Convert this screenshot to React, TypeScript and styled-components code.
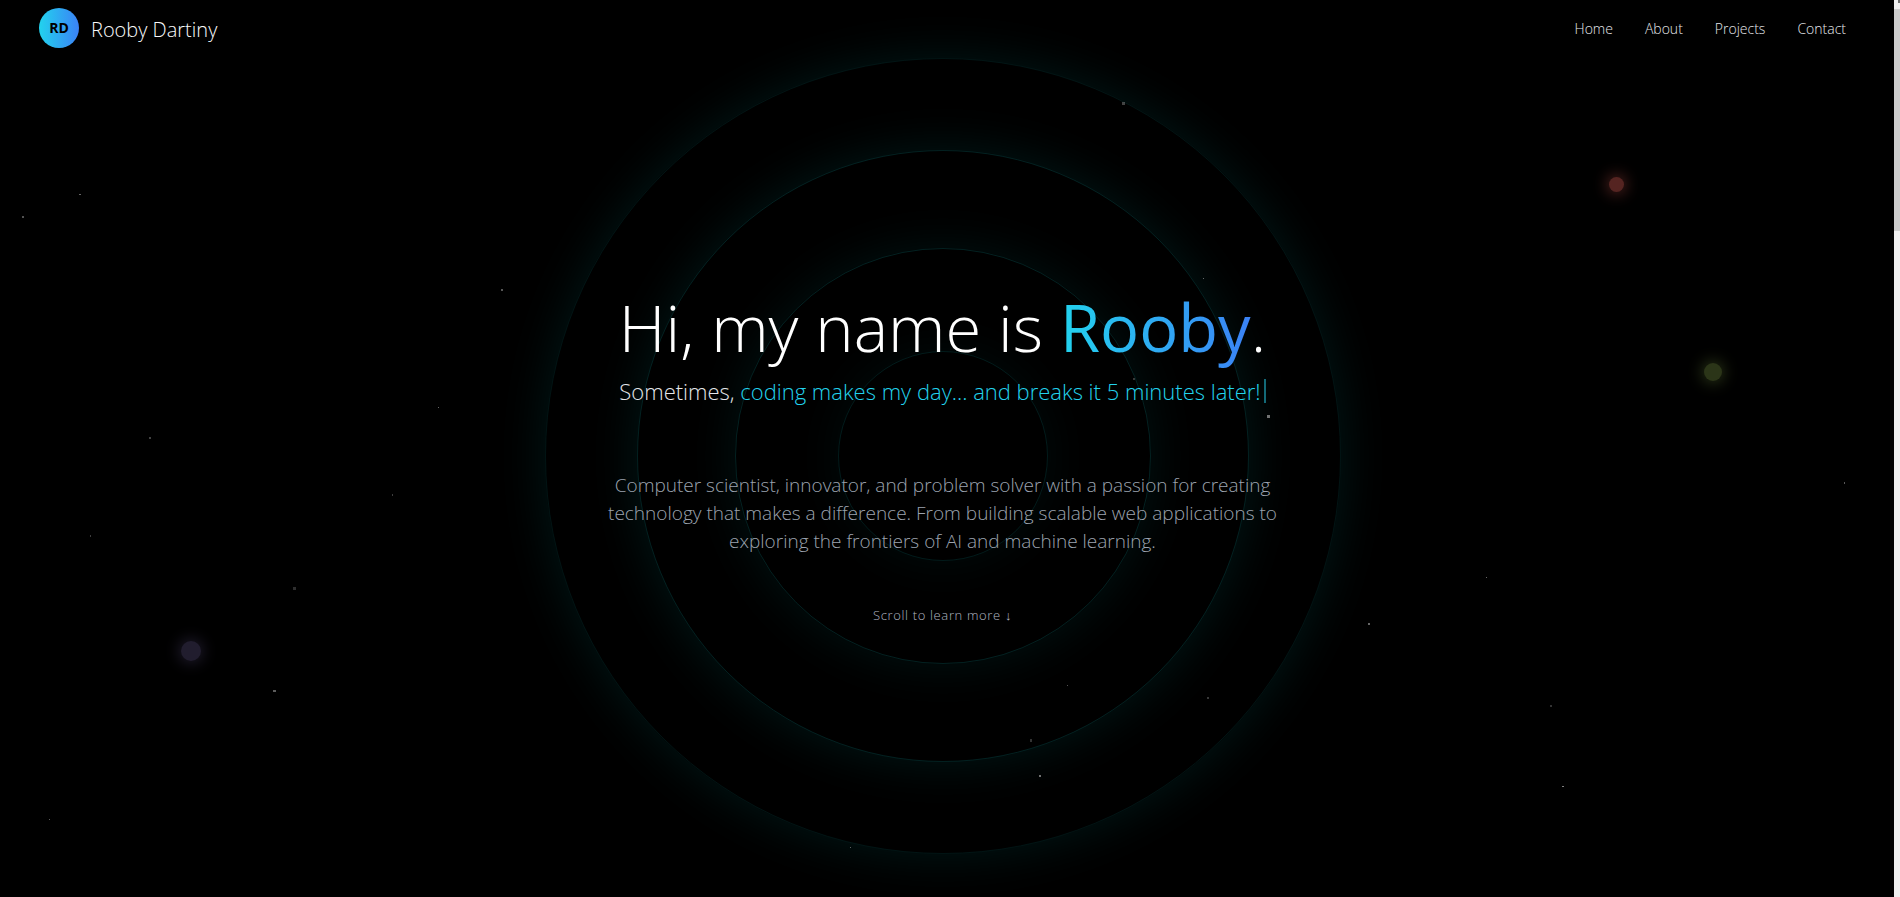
import React from "react";
import styled, { createGlobalStyle } from "styled-components";

const GlobalStyle = createGlobalStyle`
  * {
    box-sizing: border-box;
  }
  body {
    margin: 0;
    background: #000;
    color: #fff;
    font-family: "Open Sans", "Noto Sans", sans-serif;
    font-weight: 300;
  }
  h1, p {
    margin: 0;
    font-weight: 300;
  }
`;

const accent = "linear-gradient(to right, #22d3ee, #3b82f6)";

const Shell = styled.div`
  display: grid;
  grid-template-columns: 1fr 6px;
  column-gap: 9px;
  min-height: 100vh;
  overflow: hidden;
`;

const Page = styled.div`
  position: relative;
  display: flex;
  flex-direction: column;
`;

const Header = styled.header`
  position: relative;
  z-index: 2;
  display: flex;
  align-items: center;
  justify-content: space-between;
  height: 56px;
  padding: 0 39px;
`;

const Brand = styled.a`
  display: flex;
  align-items: center;
  gap: 12px;
  color: #f9fafb;
  font-size: 20px;
  line-height: 28px;
  text-decoration: none;
`;

const Monogram = styled.span`
  display: flex;
  align-items: center;
  justify-content: center;
  width: 40px;
  height: 40px;
  border-radius: 50%;
  background: ${accent};
  color: #000;
  font-size: 14px;
  font-weight: 700;
`;

const BrandName = styled.span`
  padding-top: 4px;
`;

const Nav = styled.nav`
  display: flex;
  gap: 32px;
  padding-top: 2px;
`;

const NavLink = styled.a`
  color: #e5e7eb;
  font-size: 14px;
  line-height: 20px;
  text-decoration: none;
`;

const Hero = styled.main`
  position: relative;
  flex: 1;
  display: flex;
  align-items: center;
  justify-content: center;
  padding-bottom: 38px;
`;

const Rings = styled.div`
  position: absolute;
  inset: 0;
  display: grid;
  place-items: center;
  padding-bottom: 41px;
`;

const Ring = styled.div<{ $size: number; $line: number; $glow: number }>`
  grid-area: 1 / 1;
  width: ${(p) => p.$size}px;
  height: ${(p) => p.$size}px;
  border: 1px solid rgba(20, 220, 220, ${(p) => p.$line});
  border-radius: 50%;
  box-shadow: 0 0 50px rgba(0, 240, 240, ${(p) => p.$glow});
`;

const Intro = styled.div`
  position: relative;
  z-index: 1;
  display: flex;
  flex-direction: column;
  align-items: center;
  max-width: 672px;
  text-align: center;
`;

const Title = styled.h1`
  font-size: 65px;
  line-height: 72px;
  white-space: nowrap;
`;

const FirstName = styled.span`
  background: ${accent};
  background-clip: text;
  -webkit-background-clip: text;
  color: transparent;
  font-weight: 400;
`;

const Tagline = styled.p`
  display: flex;
  align-items: center;
  margin-top: 12px;
  color: #e5e7eb;
  font-size: 22px;
  line-height: 32px;
  white-space: pre;
`;

const Typed = styled.span`
  color: #22d3ee;
`;

const Caret = styled.span`
  width: 2px;
  height: 24px;
  margin-left: 3px;
  background: #136a78;
`;

const Summary = styled.p`
  margin-top: 64px;
  color: #9ca3af;
  font-size: 19px;
  line-height: 28px;
`;

const ScrollHint = styled.p`
  margin-top: 50px;
  color: #b0b6c0;
  font-size: 13px;
  line-height: 20px;
  letter-spacing: 0.05em;
`;

const Sky = styled.div`
  position: absolute;
  inset: 0;
  pointer-events: none;
`;

const Star = styled.i<{ $x: number; $y: number; $w: number; $h: number; $o: number }>`
  position: absolute;
  left: ${(p) => p.$x}px;
  top: ${(p) => p.$y}px;
  width: ${(p) => p.$w}px;
  height: ${(p) => p.$h}px;
  background: #fff;
  opacity: ${(p) => p.$o};
`;

const Planet = styled.i<{ $x: number; $y: number; $size: number; $color: string }>`
  position: absolute;
  left: ${(p) => p.$x}px;
  top: ${(p) => p.$y}px;
  width: ${(p) => p.$size}px;
  height: ${(p) => p.$size}px;
  border-radius: 50%;
  background: ${(p) => p.$color};
  box-shadow: 0 0 15px 2px ${(p) => p.$color};
`;

const ScrollTrack = styled.div`
  display: flex;
  flex-direction: column;
  background: #f0f0f0;
`;

const ScrollArrow = styled.span`
  align-self: flex-end;
  width: 2px;
  height: 3px;
  margin-bottom: 6px;
  background: #707070;
`;

const ScrollThumb = styled.span`
  height: 222px;
  background: #cdcdcd;
`;

const links = ["Home", "About", "Projects", "Contact"];

const rings = [
  { size: 796, line: 0.09, glow: 0.1 },
  { size: 612, line: 0.15, glow: 0.1 },
  { size: 416, line: 0.15, glow: 0.08 },
  { size: 210, line: 0.12, glow: 0.05 },
];

// x, y, width, height, opacity
const stars = [
  [79, 194, 2, 1, 0.4],
  [22, 216, 2, 2, 0.32],
  [501, 289, 2, 2, 0.34],
  [438, 407, 1, 1, 0.4],
  [149, 437, 2, 2, 0.26],
  [392, 494, 1, 2, 0.24],
  [90, 535, 1, 2, 0.24],
  [293, 587, 3, 3, 0.18],
  [273, 690, 3, 2, 0.36],
  [49, 819, 1, 1, 0.36],
  [1486, 577, 1, 1, 0.4],
  [1368, 623, 2, 2, 0.4],
  [1067, 685, 1, 1, 0.32],
  [1207, 697, 2, 2, 0.22],
  [1550, 705, 2, 2, 0.2],
  [1030, 739, 2, 3, 0.2],
  [1039, 775, 2, 2, 0.44],
  [1562, 786, 2, 1, 0.5],
  [850, 847, 1, 1, 0.36],
  [1122, 102, 3, 3, 0.26],
  [1203, 278, 1, 1, 0.4],
  [1133, 378, 2, 2, 0.22],
  [1267, 415, 3, 3, 0.44],
  [1844, 482, 1, 2, 0.34],
];

const planets = [
  { x: 1609, y: 177, size: 15, color: "#552421" },
  { x: 1704, y: 363, size: 18, color: "#2b3518" },
  { x: 181, y: 641, size: 20, color: "#211d2e" },
];

export default function App() {
  return (
    <>
      <GlobalStyle />
      <Shell>
        <Page>
          <Sky aria-hidden="true">
            {planets.map((p) => (
              <Planet key={p.color} $x={p.x} $y={p.y} $size={p.size} $color={p.color} />
            ))}
          </Sky>
          <Header>
            <Brand href="#home">
              <Monogram>RD</Monogram>
              <BrandName>Rooby Dartiny</BrandName>
            </Brand>
            <Nav>
              {links.map((label) => (
                <NavLink key={label} href={`#${label.toLowerCase()}`}>
                  {label}
                </NavLink>
              ))}
            </Nav>
          </Header>
          <Hero>
            <Rings aria-hidden="true">
              {rings.map((r) => (
                <Ring key={r.size} $size={r.size} $line={r.line} $glow={r.glow} />
              ))}
            </Rings>
            <Intro>
              <Title>
                Hi, my name is <FirstName>Rooby</FirstName>.
              </Title>
              <Tagline>
                {"Sometimes, "}
                <Typed>coding makes my day... and breaks it 5 minutes later!</Typed>
                <Caret />
              </Tagline>
              <Summary>
                Computer scientist, innovator, and problem solver with a passion for creating technology
                that makes a difference. From building scalable web applications to exploring the
                frontiers of AI and machine learning.
              </Summary>
              <ScrollHint>Scroll to learn more ↓</ScrollHint>
            </Intro>
          </Hero>
          <Sky aria-hidden="true">
            {stars.map(([x, y, w, h, o]) => (
              <Star key={`${x}-${y}`} $x={x} $y={y} $w={w} $h={h} $o={o} />
            ))}
          </Sky>
        </Page>
        <ScrollTrack aria-hidden="true">
          <ScrollArrow />
          <ScrollThumb />
        </ScrollTrack>
      </Shell>
    </>
  );
}
